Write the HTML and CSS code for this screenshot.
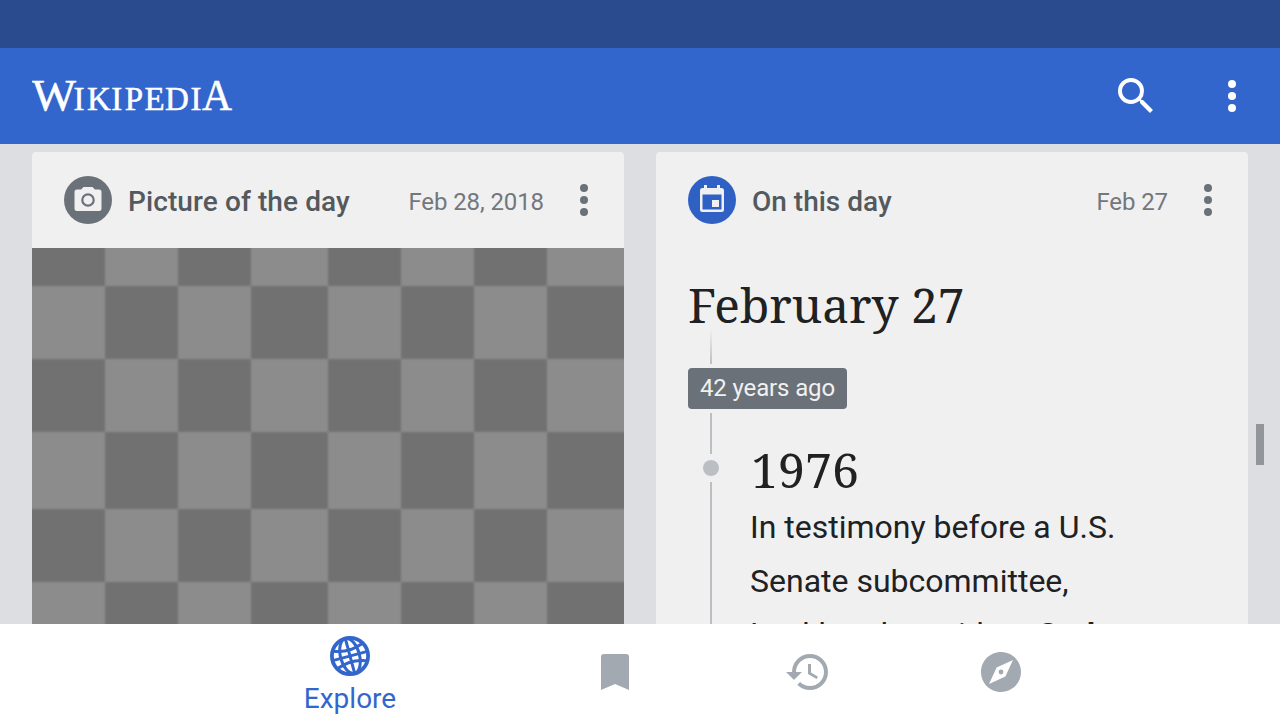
FILE: index.html
```html
<!DOCTYPE html>
<html lang="en">
<head>
<meta charset="utf-8">
<title>Wikipedia</title>
<link rel="stylesheet" href="styles.css">
</head>
<body>
<div class="status-bar"></div>
<header class="app-bar">
  <svg class="wordmark" width="204" height="48" viewBox="0 0 204 48" role="img" aria-label="Wikipedia">
    <text class="wordmark-cap" x="0" y="38" textLength="44" lengthAdjust="spacingAndGlyphs">W</text>
    <text class="wordmark-small" x="41.500 55 79.300 92.700 112.500 133 158.400" y="38">IKIPEDI</text>
    <text class="wordmark-cap" x="170" y="38" textLength="30" lengthAdjust="spacingAndGlyphs">A</text>
  </svg>
  <div class="app-actions">
    <svg width="48" height="48" viewBox="0 0 24 24" fill="#fff"><path d="M15.5 14h-.79l-.28-.27A6.47 6.47 0 0 0 16 9.5 6.5 6.5 0 1 0 9.5 16c1.61 0 3.09-.59 4.23-1.57l.27.28v.79l5 4.99L20.49 19l-4.99-5zm-6 0C7.01 14 5 11.99 5 9.5S7.01 5 9.5 5 14 7.01 14 9.5 11.99 14 9.5 14z"/></svg>
    <svg width="48" height="48" viewBox="0 0 48 48" fill="#fff"><circle cx="24" cy="12" r="4"/><circle cx="24" cy="24" r="4"/><circle cx="24" cy="36" r="4"/></svg>
  </div>
</header>
<main class="feed">
  <section class="card">
    <div class="card-head">
      <svg class="badge" width="48" height="48" viewBox="0 0 48 48"><circle cx="24" cy="24" r="24" fill="#6b7178"/><path fill="#f0f0f0" d="M19.500 11h9l2.400 2.500H35a2.500 2.500 0 0 1 2.500 2.500v16.500a2.500 2.500 0 0 1-2.500 2.500H13a2.500 2.500 0 0 1-2.500-2.500V16a2.500 2.500 0 0 1 2.500-2.500h4.100z"/><circle cx="24" cy="24" r="5.700" fill="none" stroke="#6b7178" stroke-width="2.200"/></svg>
      <h2 class="title-wide">Picture of the day</h2>
      <time>Feb 28, 2018</time>
      <svg class="more" width="16" height="40" viewBox="0 0 16 40" fill="#6b7178"><circle cx="8" cy="8" r="4"/><circle cx="8" cy="20" r="4"/><circle cx="8" cy="32" r="4"/></svg>
    </div>
    <svg class="picture" width="592" height="376" viewBox="0 0 592 376">
      <defs>
        <pattern id="checks" width="296" height="296" y="-35" patternUnits="userSpaceOnUse">
          <rect width="296" height="296" fill="#8c8c8c"/>
          <path fill="#717171" d="M0 0h73v73H0zM146 0h73v73h-73zM73 73h73v73H73zM219 73h77v73h-77zM0 146h73v73H0zM146 146h73v73h-73zM73 219h73v77H73zM219 219h77v77h-77z"/>
        </pattern>
        <filter id="soft" x="0" y="0" width="1" height="1"><feGaussianBlur stdDeviation="0.8"/></filter>
      </defs>
      <g filter="url(#soft)">
        <rect y="-10" width="592" height="396" fill="url(#checks)"/>
        <rect y="-10" width="10" height="396" fill="url(#checks)" transform="translate(-10)"/>
        <rect x="582" y="-10" width="10" height="396" fill="url(#checks)" transform="translate(10)"/>
      </g>
    </svg>
  </section>
  <section class="card">
    <div class="card-head">
      <svg class="badge" width="48" height="48" viewBox="0 0 48 48"><circle cx="24" cy="24" r="24" fill="#2f60c4"/><path fill="#f0f0f0" fill-rule="evenodd" d="M16 9h3v3h10V9h3v3h1.500a2.500 2.500 0 0 1 2.500 2.500v19a2.500 2.500 0 0 1-2.500 2.500h-19a2.500 2.500 0 0 1-2.500-2.500v-19a2.500 2.500 0 0 1 2.500-2.500H16zM14.500 18.500v15h19v-15z"/><path fill="#f0f0f0" d="M24 24h7v7h-7z"/></svg>
      <h2>On this day</h2>
      <time>Feb 27</time>
      <svg class="more" width="16" height="40" viewBox="0 0 16 40" fill="#6b7178"><circle cx="8" cy="8" r="4"/><circle cx="8" cy="20" r="4"/><circle cx="8" cy="32" r="4"/></svg>
    </div>
    <div class="day">
      <svg class="day-title" width="300" height="75" viewBox="0 0 300 75"><text class="serif" x="0" y="75" textLength="276.500" lengthAdjust="spacingAndGlyphs">February 27</text></svg>
      <div class="rail rail-fade"></div>
      <div class="years">42 years ago</div>
      <div class="event">
        <div class="track">
          <div class="rail rail-upper"></div>
          <div class="dot"></div>
          <div class="rail rail-lower"></div>
        </div>
        <div class="event-body">
          <svg class="event-year" width="120" height="80" viewBox="0 0 120 80"><text class="serif" x="1" y="79" textLength="108" lengthAdjust="spacingAndGlyphs">1976</text></svg>
          <p>In testimony before a U.S.<br>Senate subcommittee,</p>
          <p class="line-next">Lockheed president <b>Carl</b></p>
        </div>
      </div>
    </div>
  </section>
  <div class="scroll-thumb"></div>
</main>
<nav class="tabs">
  <a class="tab tab-active">
    <svg width="40" height="40" viewBox="0 0 40 40" fill="none" stroke="#3366cc" stroke-width="3"><circle cx="20" cy="20" r="18.100" stroke-width="3.800"/><g transform="rotate(-15 20 20)"><path d="M20 2v36M5 11q15 6 30 0M2 20h36M5 29q15-6 30 0"/><ellipse cx="20" cy="20" rx="9.500" ry="18"/></g></svg>
    <span>Explore</span>
  </a>
  <a class="tab tab-saved"><svg width="48" height="48" viewBox="0 0 48 48" fill="#a2a9b1"><path d="M10 9a3 3 0 0 1 3-3h22a3 3 0 0 1 3 3v33l-14-6-14 6z"/></svg></a>
  <a class="tab tab-history"><svg width="48" height="48" viewBox="0 0 24 24" fill="#a2a9b1"><path d="M13 3a9 9 0 0 0-9 9H1l3.890 3.890.070.140L9 12H6c0-3.870 3.130-7 7-7s7 3.130 7 7-3.130 7-7 7c-1.930 0-3.680-.790-4.940-2.060l-1.420 1.420A8.954 8.954 0 0 0 13 21a9 9 0 0 0 0-18zm-1 5v5l4.280 2.540.720-1.210-3.500-2.080V8H12z"/></svg></a>
  <a class="tab tab-nearby"><svg width="48" height="48" viewBox="0 0 24 24" fill="#a2a9b1"><path d="M12 2C6.480 2 2 6.480 2 12s4.480 10 10 10 10-4.480 10-10S17.520 2 12 2zm2.190 12.190L6 18l3.810-8.190L18 6l-3.810 8.190z"/><circle cx="12" cy="12" r="1.200"/></svg></a>
</nav>
</body>
</html>
```

FILE: styles.css
```css
* { box-sizing: border-box; }
body {
  margin: 0;
  width: 1280px;
  height: 720px;
  overflow: hidden;
  display: flex;
  flex-direction: column;
  background: #dcdee2;
  font-family: Roboto, "Liberation Sans", sans-serif;
  color: #202122;
}
svg { display: block; flex: none; }
.status-bar { height: 48px; flex: none; background: #2a4b8d; }
.app-bar {
  height: 96px;
  flex: none;
  display: flex;
  align-items: center;
  justify-content: space-between;
  padding: 0 24px 0 32px;
  background: #3366cc;
}
.wordmark { fill: #fff; stroke: #fff; stroke-width: 0.5px; font-family: "Liberation Serif", serif; }
.wordmark-cap { font-size: 44px; }
.wordmark-small { font-size: 33px; }
.app-actions { display: flex; gap: 48px; }
.feed {
  position: relative;
  height: 480px;
  flex: none;
  display: grid;
  grid-template-columns: 592px 592px;
  column-gap: 32px;
  padding: 8px 32px 0;
  overflow: hidden;
}
.card {
  height: 472px;
  background: #f0f0f0;
  border-radius: 4px 4px 0 0;
  overflow: hidden;
}
.card-head {
  height: 96px;
  display: flex;
  align-items: center;
  padding: 0 32px;
}
.card-head h2 {
  flex: 1;
  margin: 3px 0 0 16px;
  font-size: 28px;
  font-weight: 500;
  color: #54595d;
}
.card-head .title-wide { letter-spacing: 0.1px; }
.card-head time { margin: 3px 32px 0 0; font-size: 24px; letter-spacing: -0.1px; color: #72777d; }
.day { padding: 0 32px; }
.day-title, .event-year { overflow: visible; }
.serif { font-family: "Noto Serif", "DejaVu Serif Condensed", "DejaVu Serif", serif; font-size: 48px; fill: #202122; }
.rail { width: 2px; background: #bbbfc4; }
.rail-fade { height: 41px; margin: 0 0 4px 22px; background: linear-gradient(rgba(187,191,196,0) 15%, #bbbfc4); }
.years {
  width: 159px;
  height: 41px;
  border-radius: 4px;
  background: #6b7178;
  color: #f0f0f0;
  font-size: 24px;
  letter-spacing: -0.13px;
  line-height: 41px;
  text-align: center;
}
.event { display: flex; gap: 39px; }
.track { width: 23px; padding: 4px 0 0; display: flex; flex-direction: column; }
.track .rail { margin-left: 22px; }
.rail-upper { height: 41px; }
.dot { width: 16px; height: 16px; margin: 6px 0 6px 15px; border-radius: 50%; background: #bbbfc4; flex: none; }
.rail-lower { height: 142px; }
.event-body p { margin: 11px 0 0; font-size: 32px; line-height: 54px; white-space: nowrap; }
.event-body .line-next { margin-top: -1px; }
.scroll-thumb { position: absolute; left: 1256px; top: 280px; width: 8px; height: 41px; background: #929599; }
.tabs {
  height: 96px;
  flex: none;
  display: grid;
  grid-template-columns: 168px 362px 24px 362px;
  padding-left: 266px;
  background: #fff;
}
.tab { display: flex; flex-direction: column; align-items: center; justify-content: center; }
.tab-active { justify-content: flex-start; padding-top: 12px; color: #3366cc; font-size: 28px; line-height: 33px; }
.tab-active span { margin-top: 6px; }
```
